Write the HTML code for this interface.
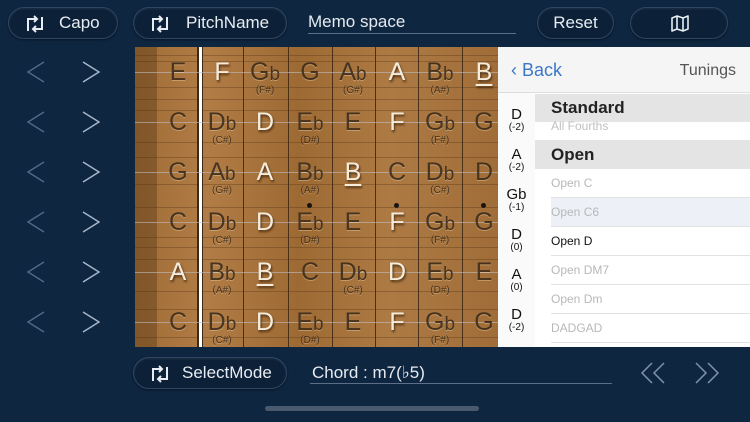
<!DOCTYPE html>
<html><head><meta charset="utf-8"><style>
*{margin:0;padding:0;box-sizing:border-box}
body{width:750px;height:422px;background:#0f2640;position:relative;overflow:hidden;font-family:"Liberation Sans","DejaVu Sans",sans-serif;color:#e6ebf1}
.btn{position:absolute;height:32px;border-radius:16px;background:#0c2037;border:1px solid #2e4766;box-shadow:inset 0 1px 2px rgba(255,255,255,.08),0 1px 2px rgba(0,0,0,.5);font-size:17px;line-height:30px;color:#e8edf3}
.ic{position:absolute;top:7px}
.ul{position:absolute;border-bottom:1px solid #5b7088;font-size:17px;color:#e6ebf1}
.ar{position:absolute}
#fb{position:absolute;left:135px;top:47px;width:363px;height:300px;background:linear-gradient(90deg,#a06c36,#b17c45 20%,#9e6a34 45%,#ad7a44 70%,#a06d38);overflow:hidden}
.grain{position:absolute;left:0;right:0;height:1px;background:rgba(70,40,10,.3)}
.fret{position:absolute;top:0;bottom:0;width:1px;background:#4a3018}
.str{position:absolute;left:0;right:0;height:1px;background:rgba(190,190,195,.6)}
.n{position:absolute;width:44px;text-align:center;font-size:25px;line-height:26px;color:rgba(50,35,20,.85);text-shadow:0 1px 0 rgba(255,225,180,.35)}
.n small{display:block;font-size:10px;line-height:10px;margin-top:-2px}
.n i{font-style:normal;font-size:19px}
.w{color:#f6ecdc;text-shadow:1px 2px 2px rgba(40,20,0,.7)}
.u{text-decoration:underline;text-underline-offset:4px;text-decoration-thickness:2px}
.dot{position:absolute;width:5px;height:5px;border-radius:50%;background:#1a1410}
#pn{position:absolute;left:498px;top:47px;width:252px;height:300px;background:#fff;color:#222}
.tl{position:absolute;left:0;width:37px;text-align:center;font-size:15px;line-height:15px;color:#111}
.tl small{display:block;font-size:10px;line-height:12px}
.row{position:absolute;left:53px;right:0;height:29px;border-bottom:1px solid #e2e2e2;font-size:12px;line-height:29px;color:#b8b8b8}
.sh{position:absolute;left:37px;right:0;background:#e4e4e4;font-size:17px;font-weight:bold;color:#222;padding-left:16px}
</style></head><body>

<div class="btn" style="left:8px;top:7px;width:110px"><svg class="ic" style="left:15px" width="22" height="18" viewBox="0 0 22 18" fill="none" stroke="#e8edf3" stroke-width="2"><path d="M4 16V4h9M10 1l3 3-3 3"/><path d="M18 2v12H9M12 17l-3-3 3-3"/></svg><span style="position:absolute;left:50px">Capo</span></div>
<div class="btn" style="left:133px;top:7px;width:154px"><svg class="ic" style="left:15px" width="22" height="18" viewBox="0 0 22 18" fill="none" stroke="#e8edf3" stroke-width="2"><path d="M4 16V4h9M10 1l3 3-3 3"/><path d="M18 2v12H9M12 17l-3-3 3-3"/></svg><span style="position:absolute;left:52px">PitchName</span></div>
<div class="ul" style="left:308px;top:12px;width:208px;height:22px">Memo space</div>
<div class="btn" style="left:537px;top:7px;width:77px;text-align:center">Reset</div>
<div class="btn" style="left:630px;top:7px;width:98px"><svg style="position:absolute;left:40px;top:7px" width="18" height="17" viewBox="0 0 18 17" fill="none" stroke="#e8edf3" stroke-width="1.6" stroke-linejoin="round"><path d="M1 3l5-2 6 2 5-2v13l-5 2-6-2-5 2z M6 1v13 M12 3v13"/></svg></div>

<svg style="position:absolute;left:0;top:0" width="130" height="350" fill="none" stroke-width="1.4">
<g stroke="#52698a"><path d="M44 62L28 72l16 10"/><path d="M44 112L28 122l16 10"/><path d="M44 162L28 172l16 10"/><path d="M44 212L28 222l16 10"/><path d="M44 262L28 272l16 10"/><path d="M44 312L28 322l16 10"/></g>
<g stroke="#a9b8ca"><path d="M83 62l16 10-16 10"/><path d="M83 112l16 10-16 10"/><path d="M83 162l16 10-16 10"/><path d="M83 212l16 10-16 10"/><path d="M83 262l16 10-16 10"/><path d="M83 312l16 10-16 10"/></g>
</svg>

<div id="fb">
<div style="position:absolute;left:0;top:0;bottom:0;width:22px;background:rgba(60,35,10,.3)"></div>
<div class="grain" style="top:8px"></div><div class="grain" style="top:14px"></div><div class="grain" style="top:40px"></div><div class="grain" style="top:52px"></div><div class="grain" style="top:63px"></div><div class="grain" style="top:95px"></div><div class="grain" style="top:110px"></div><div class="grain" style="top:137px"></div><div class="grain" style="top:160px"></div><div class="grain" style="top:190px"></div><div class="grain" style="top:200px"></div><div class="grain" style="top:212px"></div><div class="grain" style="top:244px"></div><div class="grain" style="top:262px"></div><div class="grain" style="top:290px"></div>
<div style="position:absolute;left:62px;top:0;bottom:0;width:6px;background:#fff;border-left:2px solid #3a2a18;border-right:1px solid #3a2a18"></div>
<div class="fret" style="left:108px"></div><div class="fret" style="left:153px"></div><div class="fret" style="left:197px"></div><div class="fret" style="left:240px"></div><div class="fret" style="left:283px"></div><div class="fret" style="left:327px"></div>
<div class="str" style="top:25px"></div><div class="str" style="top:75px"></div><div class="str" style="top:125px"></div><div class="str" style="top:175px"></div><div class="str" style="top:225px"></div><div class="str" style="top:275px"></div>
<div class="dot" style="left:172px;top:156px"></div><div class="dot" style="left:259px;top:156px"></div><div class="dot" style="left:346px;top:156px"></div>
</div>

<div style="position:absolute;left:0;top:0">
<div class="n" style="left:156px;top:59px">E</div>
<div class="n w" style="left:200px;top:59px">F</div>
<div class="n" style="left:243px;top:59px">G<i>b</i><small>(F#)</small></div>
<div class="n" style="left:288px;top:59px">G</div>
<div class="n" style="left:331px;top:59px">A<i>b</i><small>(G#)</small></div>
<div class="n w" style="left:375px;top:59px">A</div>
<div class="n" style="left:418px;top:59px">B<i>b</i><small>(A#)</small></div>
<div class="n w u" style="left:462px;top:59px">B</div>

<div class="n" style="left:156px;top:109px">C</div>
<div class="n" style="left:200px;top:109px">D<i>b</i><small>(C#)</small></div>
<div class="n w" style="left:243px;top:109px">D</div>
<div class="n" style="left:288px;top:109px">E<i>b</i><small>(D#)</small></div>
<div class="n" style="left:331px;top:109px">E</div>
<div class="n w" style="left:375px;top:109px">F</div>
<div class="n" style="left:418px;top:109px">G<i>b</i><small>(F#)</small></div>
<div class="n" style="left:462px;top:109px">G</div>

<div class="n" style="left:156px;top:159px">G</div>
<div class="n" style="left:200px;top:159px">A<i>b</i><small>(G#)</small></div>
<div class="n w" style="left:243px;top:159px">A</div>
<div class="n" style="left:288px;top:159px">B<i>b</i><small>(A#)</small></div>
<div class="n w u" style="left:331px;top:159px">B</div>
<div class="n" style="left:375px;top:159px">C</div>
<div class="n" style="left:418px;top:159px">D<i>b</i><small>(C#)</small></div>
<div class="n" style="left:462px;top:159px">D</div>

<div class="n" style="left:156px;top:209px">C</div>
<div class="n" style="left:200px;top:209px">D<i>b</i><small>(C#)</small></div>
<div class="n w" style="left:243px;top:209px">D</div>
<div class="n" style="left:288px;top:209px">E<i>b</i><small>(D#)</small></div>
<div class="n" style="left:331px;top:209px">E</div>
<div class="n w" style="left:375px;top:209px">F</div>
<div class="n" style="left:418px;top:209px">G<i>b</i><small>(F#)</small></div>
<div class="n" style="left:462px;top:209px">G</div>

<div class="n w" style="left:156px;top:259px">A</div>
<div class="n" style="left:200px;top:259px">B<i>b</i><small>(A#)</small></div>
<div class="n w u" style="left:243px;top:259px">B</div>
<div class="n" style="left:288px;top:259px">C</div>
<div class="n" style="left:331px;top:259px">D<i>b</i><small>(C#)</small></div>
<div class="n w" style="left:375px;top:259px">D</div>
<div class="n" style="left:418px;top:259px">E<i>b</i><small>(D#)</small></div>
<div class="n" style="left:462px;top:259px">E</div>

<div class="n" style="left:156px;top:309px">C</div>
<div class="n" style="left:200px;top:309px">D<i>b</i><small>(C#)</small></div>
<div class="n w" style="left:243px;top:309px">D</div>
<div class="n" style="left:288px;top:309px">E<i>b</i><small>(D#)</small></div>
<div class="n" style="left:331px;top:309px">E</div>
<div class="n w" style="left:375px;top:309px">F</div>
<div class="n" style="left:418px;top:309px">G<i>b</i><small>(F#)</small></div>
<div class="n" style="left:462px;top:309px">G</div>
</div>

<div id="pn">
<div style="position:absolute;left:0;top:0;width:252px;height:46px;background:#f5f5f5;border-bottom:1px solid #ddd"></div>
<div style="position:absolute;left:13px;top:13px;font-size:18px;color:#3b78c8">‹ Back</div>
<div style="position:absolute;right:14px;top:15px;font-size:16px;color:#555">Tunings</div>
<div style="position:absolute;left:0;top:46px;width:37px;height:254px;background:#fafafa"></div>
<div class="tl" style="top:60px">D<small>(-2)</small></div>
<div class="tl" style="top:100px">A<small>(-2)</small></div>
<div class="tl" style="top:140px">Gb<small>(-1)</small></div>
<div class="tl" style="top:180px">D<small>(0)</small></div>
<div class="tl" style="top:220px">A<small>(0)</small></div>
<div class="tl" style="top:260px">D<small>(-2)</small></div>
<div class="sh" style="top:47px;height:28px;line-height:28px">Standard</div>
<div style="position:absolute;left:53px;top:72px;font-size:12px;color:#c0c0c0">All Fourths</div>
<div class="sh" style="top:93px;height:29px;line-height:29px">Open</div>
<div class="row" style="top:122px">Open C</div>
<div class="row" style="top:151px;background:#edf1f7">Open C6</div>
<div class="row" style="top:180px;color:#111">Open D</div>
<div class="row" style="top:209px">Open DM7</div>
<div class="row" style="top:238px">Open Dm</div>
<div class="row" style="top:267px">DADGAD</div>
</div>

<div class="btn" style="left:133px;top:357px;width:154px"><svg class="ic" style="left:15px" width="22" height="18" viewBox="0 0 22 18" fill="none" stroke="#e8edf3" stroke-width="2"><path d="M4 16V4h9M10 1l3 3-3 3"/><path d="M18 2v12H9M12 17l-3-3 3-3"/></svg><span style="position:absolute;left:48px">SelectMode</span></div>
<div class="ul" style="left:310px;top:363px;width:302px;height:21px;padding-left:2px">Chord : m7(♭5)</div>
<svg style="position:absolute;left:640px;top:362px" width="26" height="22" viewBox="0 0 26 22" fill="none" stroke="#8093aa" stroke-width="1.5"><path d="M12 1L2 11l10 10M24 1L14 11l10 10"/></svg>
<svg style="position:absolute;left:694px;top:362px" width="26" height="22" viewBox="0 0 26 22" fill="none" stroke="#8093aa" stroke-width="1.5"><path d="M2 1l10 10L2 21M14 1l10 10-10 10"/></svg>
<div style="position:absolute;left:265px;top:406px;width:214px;height:5px;border-radius:3px;background:#4a5a6e"></div>
</body></html>
